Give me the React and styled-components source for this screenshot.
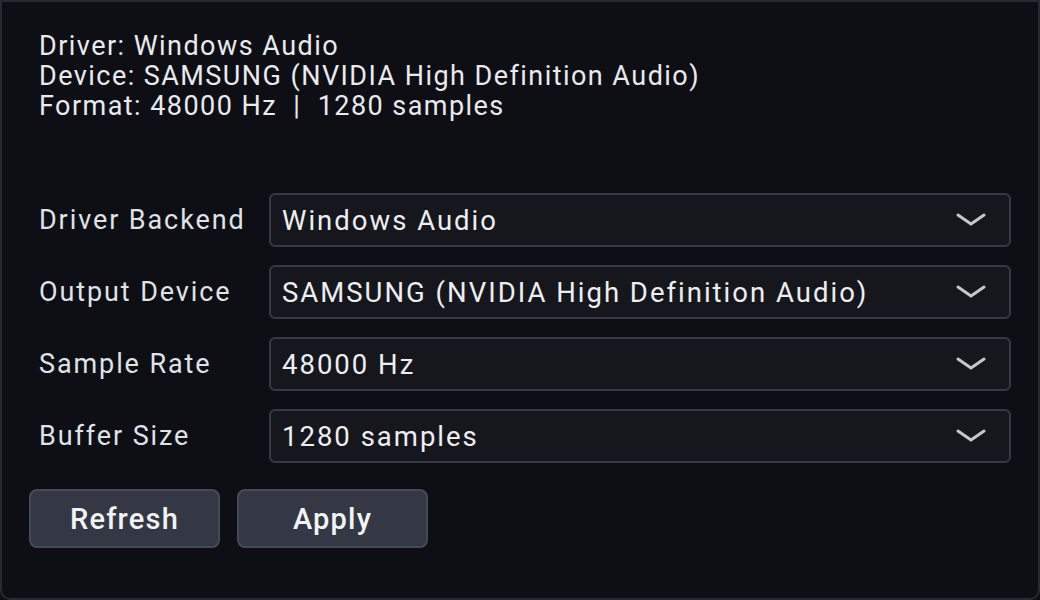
import React from 'react';
import styled, { createGlobalStyle } from 'styled-components';

const GlobalStyle = createGlobalStyle`
  html, body {
    margin: 0;
    padding: 0;
    background: #0e0f14;
  }
  * {
    box-sizing: border-box;
  }
`;

const Panel = styled.div`
  width: 1040px;
  height: 600px;
  padding: 29px 27px 29px 27px;
  background: #0e0f14;
  border: 2px solid #262a33;
  border-radius: 0 0 10px 10px;
  font-family: Roboto, "Liberation Sans", sans-serif;
  color: #e6e8ec;
  display: flex;
  flex-direction: column;
`;

const Info = styled.div`
  padding-left: 10px;
  font-size: 27px;
  line-height: 30px;
  letter-spacing: 1.45px;
  color: #e8eaee;
`;

const Form = styled.div`
  margin-top: 72px;
  display: flex;
  flex-direction: column;
  gap: 18px;
`;

const Row = styled.div`
  display: grid;
  grid-template-columns: 230px 1fr;
  align-items: center;
  padding-left: 10px;
`;

const Label = styled.div`
  font-size: 27px;
  letter-spacing: 1.9px;
  color: #dfe2e7;
`;

const Select = styled.div`
  height: 54px;
  display: flex;
  align-items: center;
  justify-content: space-between;
  padding: 0 23px 0 11px;
  background: #16171c;
  border: 2px solid #353a46;
  border-radius: 6px;
  font-size: 27.5px;
  letter-spacing: 2px;
  color: #eceef2;
`;

const Chevron = () => (
  <svg width="30" height="14" viewBox="0 0 30 14" fill="none">
    <path d="M2 2 L15 11 L28 2" stroke="#c3c7ce" strokeWidth="3" strokeLinecap="round" strokeLinejoin="round" />
  </svg>
);

const Actions = styled.div`
  margin-top: 26px;
  display: flex;
  gap: 17px;
`;

const Button = styled.button`
  width: 191px;
  height: 59px;
  padding: 0;
  background: #343844;
  border: 2px solid #444a57;
  border-radius: 8px;
  font-family: inherit;
  font-size: 29px;
  font-weight: 500;
  letter-spacing: 1.2px;
  color: #f2f3f5;
  cursor: pointer;
`;

const rows = [
  ['Driver Backend', 'Windows Audio'],
  ['Output Device', 'SAMSUNG (NVIDIA High Definition Audio)'],
  ['Sample Rate', '48000 Hz'],
  ['Buffer Size', '1280 samples'],
];

export default function App() {
  return (
    <>
      <GlobalStyle />
      <Panel>
        <Info>
          <div>Driver: Windows Audio</div>
          <div>Device: SAMSUNG (NVIDIA High Definition Audio)</div>
          <div>Format: 48000 Hz &nbsp;|&nbsp; 1280 samples</div>
        </Info>
        <Form>
          {rows.map(([label, value]) => (
            <Row key={label}>
              <Label>{label}</Label>
              <Select>
                <span>{value}</span>
                <Chevron />
              </Select>
            </Row>
          ))}
        </Form>
        <Actions>
          <Button>Refresh</Button>
          <Button>Apply</Button>
        </Actions>
      </Panel>
    </>
  );
}
